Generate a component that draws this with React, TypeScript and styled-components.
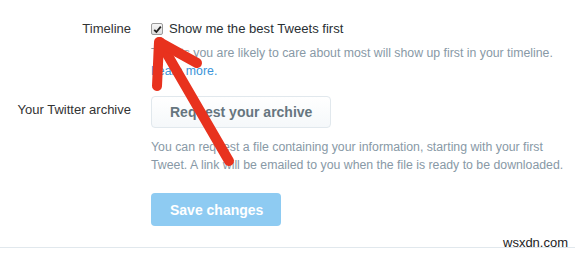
import React from "react";
import styled, { createGlobalStyle } from "styled-components";

const GlobalStyle = createGlobalStyle`
  html, body {
    margin: 0;
    padding: 0;
    background: #ffffff;
  }
  body {
    font-family: "Liberation Sans", Arial, sans-serif;
    color: #292f33;
  }
`;

const Page = styled.div`
  position: relative;
  width: 575px;
  height: 254px;
  overflow: hidden;
`;

const Form = styled.div`
  display: flex;
  flex-direction: column;
  gap: 16px;
  padding: 20px 0 21px 0;
  border-bottom: 1px solid #e1e8ed;
`;

const Row = styled.div`
  display: grid;
  grid-template-columns: 131px 1fr;
  column-gap: 20px;
`;

const Label = styled.div<{ $offset?: number }>`
  text-align: right;
  font-size: 13px;
  line-height: 18px;
  color: #333333;
  padding-top: ${(p) => p.$offset ?? 0}px;
`;

const Field = styled.div`
  display: flex;
  flex-direction: column;
  align-items: flex-start;
`;

const CheckLine = styled.label`
  display: flex;
  align-items: center;
  gap: 6px;
  font-size: 13.1px;
  line-height: 18px;
  color: #292f33;
`;

const Box = styled.span`
  display: inline-flex;
  align-items: center;
  justify-content: center;
  width: 10px;
  height: 10px;
  border: 1px solid #9a9a9a;
  border-radius: 2px;
  background: linear-gradient(#f6f6f6, #dedede);
`;

const Help = styled.p<{ $top: number }>`
  margin: ${(p) => p.$top}px 0 0 0;
  font-size: 12.3px;
  line-height: 18px;
  color: #8899a6;
  max-width: 418px;
`;

const Link = styled.a`
  color: #3b94d9;
  text-decoration: none;
`;

const Button = styled.button`
  height: 32px;
  padding: 0 18px;
  border: 1px solid #e1e8ed;
  border-radius: 4px;
  background: linear-gradient(#ffffff, #f5f8fa);
  color: #66757f;
  font-family: "Liberation Sans", Arial, sans-serif;
  font-size: 14px;
  font-weight: bold;
`;

const SaveButton = styled.button`
  margin-top: 19px;
  height: 33px;
  padding: 0 18px 0 19px;
  border: none;
  border-radius: 4px;
  background: #8ecbf2;
  color: #ffffff;
  font-family: "Liberation Sans", Arial, sans-serif;
  font-size: 14px;
  font-weight: bold;
`;

const Watermark = styled.span`
  position: absolute;
  left: 503px;
  top: 236px;
  font-size: 13px;
  line-height: 13px;
  color: #222222;
`;

const Arrow = styled.svg`
  position: absolute;
  left: 0;
  top: 0;
  pointer-events: none;
`;

export default function App() {
  return (
    <Page>
      <GlobalStyle />
      <Form>
        <Row>
          <Label>Timeline</Label>
          <Field>
            <CheckLine>
              <Box>
                <svg width="9" height="9" viewBox="0 0 9 9">
                  <path d="M1.2 4.8 L3.4 7 L7.8 1.6" fill="none" stroke="#222" strokeWidth="1.8" />
                </svg>
              </Box>
              Show me the best Tweets first
            </CheckLine>
            <Help $top={6}>
              Tweets you are likely to care about most will show up first in your timeline.{" "}
              <Link href="#">Learn more.</Link>
            </Help>
          </Field>
        </Row>
        <Row>
          <Label $offset={5}>Your Twitter archive</Label>
          <Field>
            <Button>Request your archive</Button>
            <Help $top={10}>
              You can request a file containing your information, starting with your first Tweet. A
              link will be emailed to you when the file is ready to be downloaded.
            </Help>
            <SaveButton>Save changes</SaveButton>
          </Field>
        </Row>
      </Form>
      <Watermark>wsxdn.com</Watermark>
      <Arrow width="575" height="254" viewBox="0 0 575 254">
        <g stroke="#e8321e" strokeWidth="10" strokeLinecap="round" strokeLinejoin="round" fill="none">
          <path d="M229 161 L160 42" />
          <path d="M157 86 L159 42 L197 63" />
        </g>
      </Arrow>
    </Page>
  );
}
